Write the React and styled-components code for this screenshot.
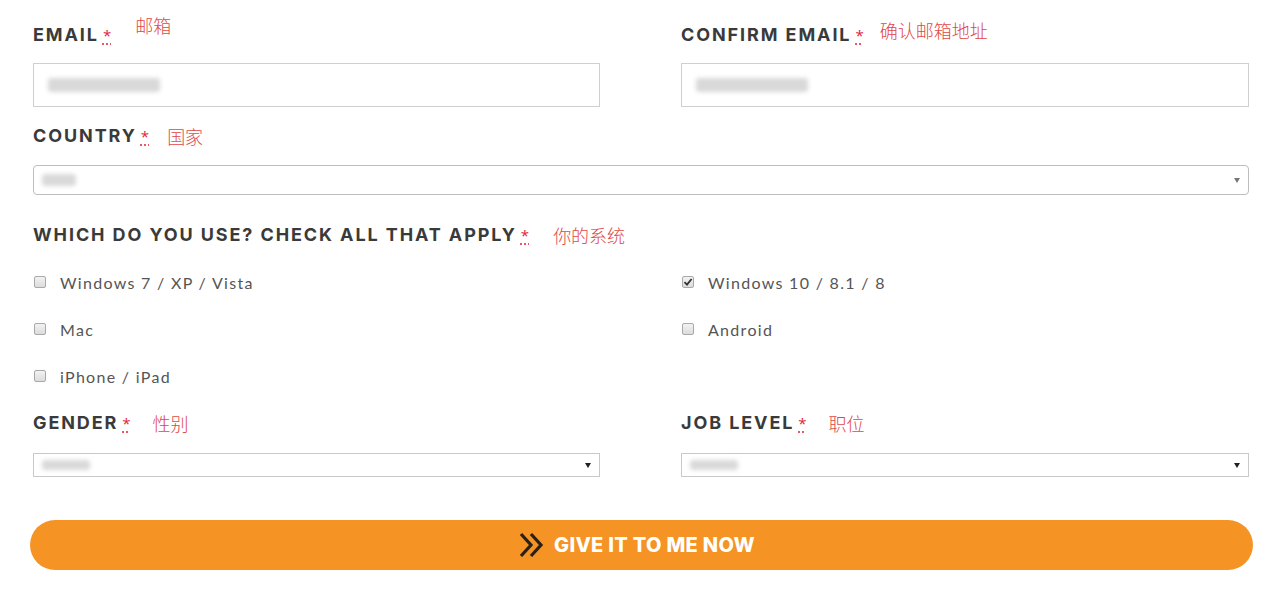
import React from "react";
import styled, { createGlobalStyle } from "styled-components";

const Global = createGlobalStyle`
  html, body { margin: 0; padding: 0; background: #fff; }
  body { font-family: "Open Sans", "Liberation Sans", sans-serif; }
  * { box-sizing: border-box; }
`;

const Form = styled.form`
  width: 1280px;
  padding: 25px 31px 0 33px;
`;

const Grid = styled.div`
  display: grid;
  grid-template-columns: 567px 568px;
  column-gap: 81px;
  margin-top: ${(p) => p.$top || 0}px;
`;

const Field = styled.div`
  display: flex;
  flex-direction: column;
  grid-column: ${(p) => (p.$full ? "1 / -1" : "auto")};
`;

const LabelRow = styled.div`
  display: flex;
  align-items: center;
  height: 20px;
  margin-bottom: ${(p) => p.$gap}px;
`;

const Label = styled.label`
  font-family: "Inter", "Liberation Sans", sans-serif;
  font-weight: 700;
  font-size: 18px;
  letter-spacing: 1.9px;
  color: #3a3a3a;
  text-transform: uppercase;
  line-height: 20px;
  white-space: nowrap;
`;

const Req = styled.abbr`
  color: #e0223a;
  font-size: 15px;
  margin-left: 4px;
  text-decoration: underline dotted #e0223a;
  text-underline-offset: 3px;
  letter-spacing: 0;
`;

const Note = styled.span`
  font-family: "Noto Sans CJK SC", sans-serif;
  font-weight: 300;
  font-size: 18px;
  color: #e04848;
  margin-left: ${(p) => p.$gap || 20}px;
  position: relative;
  top: ${(p) => p.$shift || 0}px;
  line-height: 20px;
`;

const TextBox = styled.div`
  height: 44px;
  border: 1px solid #cfcfcf;
  background: #fff;
  display: flex;
  align-items: center;
  padding-left: 14px;
`;

const Blur = styled.span`
  display: inline-block;
  width: ${(p) => p.$w}px;
  height: ${(p) => p.$h || 14}px;
  background: #d9d9d9;
  filter: blur(2px);
  border-radius: 3px;
`;

const Select = styled.div`
  height: ${(p) => p.$h}px;
  border: 1px solid ${(p) => (p.$round ? "#bdbdbd" : "#c9c9c9")};
  border-radius: ${(p) => (p.$round ? 4 : 0)}px;
  background: #fff;
  display: flex;
  align-items: center;
  justify-content: space-between;
  padding: 0 8px 0 8px;
`;

const Arrow = styled.span`
  width: 0;
  height: 0;
  border-left: ${(p) => p.$s}px solid transparent;
  border-right: ${(p) => p.$s}px solid transparent;
  border-top: ${(p) => p.$s * 1.6}px solid ${(p) => p.$c};
`;

const Checks = styled.div`
  display: grid;
  grid-template-columns: 567px 568px;
  column-gap: 81px;
  row-gap: 23px;
  margin-top: 25px;
`;

const CheckItem = styled.label`
  display: flex;
  align-items: center;
  height: 24px;
  font-family: "Lato", "Liberation Sans", sans-serif;
  font-size: 16px;
  letter-spacing: 1.3px;
  color: #555;
`;

const Box = styled.span`
  width: 12px;
  height: 12px;
  margin-left: 1px;
  margin-right: 14px;
  border: 1px solid #a9a9a9;
  border-radius: 2px;
  background: linear-gradient(#f2f2f2, #dcdcdc);
  display: flex;
  align-items: center;
  justify-content: center;
`;

const Button = styled.button`
  margin: 43px -4px 0 -3px;
  height: 50px;
  width: calc(100% + 7px);
  border: none;
  border-radius: 25px;
  background: #f59324;
  display: flex;
  align-items: center;
  justify-content: center;
  gap: 8px;
  font-family: "Inter", "Liberation Sans", sans-serif;
  font-weight: 800;
  font-size: 20px;
  color: #fff;
  letter-spacing: 0.3px;
  padding: 0 10px 0 0;
`;

function FieldLabel({ text, note, gap, shift, mb }) {
  return (
    <LabelRow $gap={mb}>
      <Label>{text}</Label>
      <Req title="required">*</Req>
      <Note $gap={gap} $shift={shift}>{note}</Note>
    </LabelRow>
  );
}

function Check({ label, checked }) {
  return (
    <CheckItem>
      <Box>
        {checked && (
          <svg width="10" height="10" viewBox="0 0 10 10">
            <path d="M1.5 5.2 L4 7.6 L8.6 2" fill="none" stroke="#333" strokeWidth="1.8" />
          </svg>
        )}
      </Box>
      {label}
    </CheckItem>
  );
}

export default function App() {
  return (
    <>
      <Global />
      <Form>
        <Grid>
          <Field>
            <FieldLabel text="Email" note="邮箱" gap={24} shift={-10} mb={18} />
            <TextBox>
              <Blur $w={112} />
            </TextBox>
          </Field>
          <Field>
            <FieldLabel text="Confirm Email" note="确认邮箱地址" gap={16} shift={-5} mb={18} />
            <TextBox>
              <Blur $w={112} />
            </TextBox>
          </Field>
        </Grid>
        <Grid $top={19}>
          <Field $full>
            <FieldLabel text="Country" note="国家" gap={18} mb={19} />
            <Select $h={30} $round>
              <Blur $w={34} $h={12} />
              <Arrow $s={3.5} $c="#777" />
            </Select>
          </Field>
        </Grid>
        <Grid $top={30}>
          <Field $full>
            <FieldLabel text="Which do you use? Check all that apply" note="你的系统" gap={24} mb={0} />
          </Field>
        </Grid>
        <Checks>
          <Check label="Windows 7 / XP / Vista" />
          <Check label="Windows 10 / 8.1 / 8" checked />
          <Check label="Mac" />
          <Check label="Android" />
          <Check label="iPhone / iPad" />
        </Checks>
        <Grid $top={25}>
          <Field>
            <FieldLabel text="Gender" note="性别" gap={22} mb={20} />
            <Select $h={24}>
              <Blur $w={48} $h={10} />
              <Arrow $s={3.5} $c="#222" />
            </Select>
          </Field>
          <Field>
            <FieldLabel text="Job Level" note="职位" gap={22} mb={20} />
            <Select $h={24}>
              <Blur $w={48} $h={10} />
              <Arrow $s={3.5} $c="#222" />
            </Select>
          </Field>
        </Grid>
        <Button type="button">
          <svg width="28" height="26" viewBox="0 0 28 26">
            <path d="M3 2 L13 13 L3 24 M13 2 L23 13 L13 24" fill="none" stroke="#2b2118" strokeWidth="3.2" />
          </svg>
          GIVE IT TO ME NOW
        </Button>
      </Form>
    </>
  );
}
